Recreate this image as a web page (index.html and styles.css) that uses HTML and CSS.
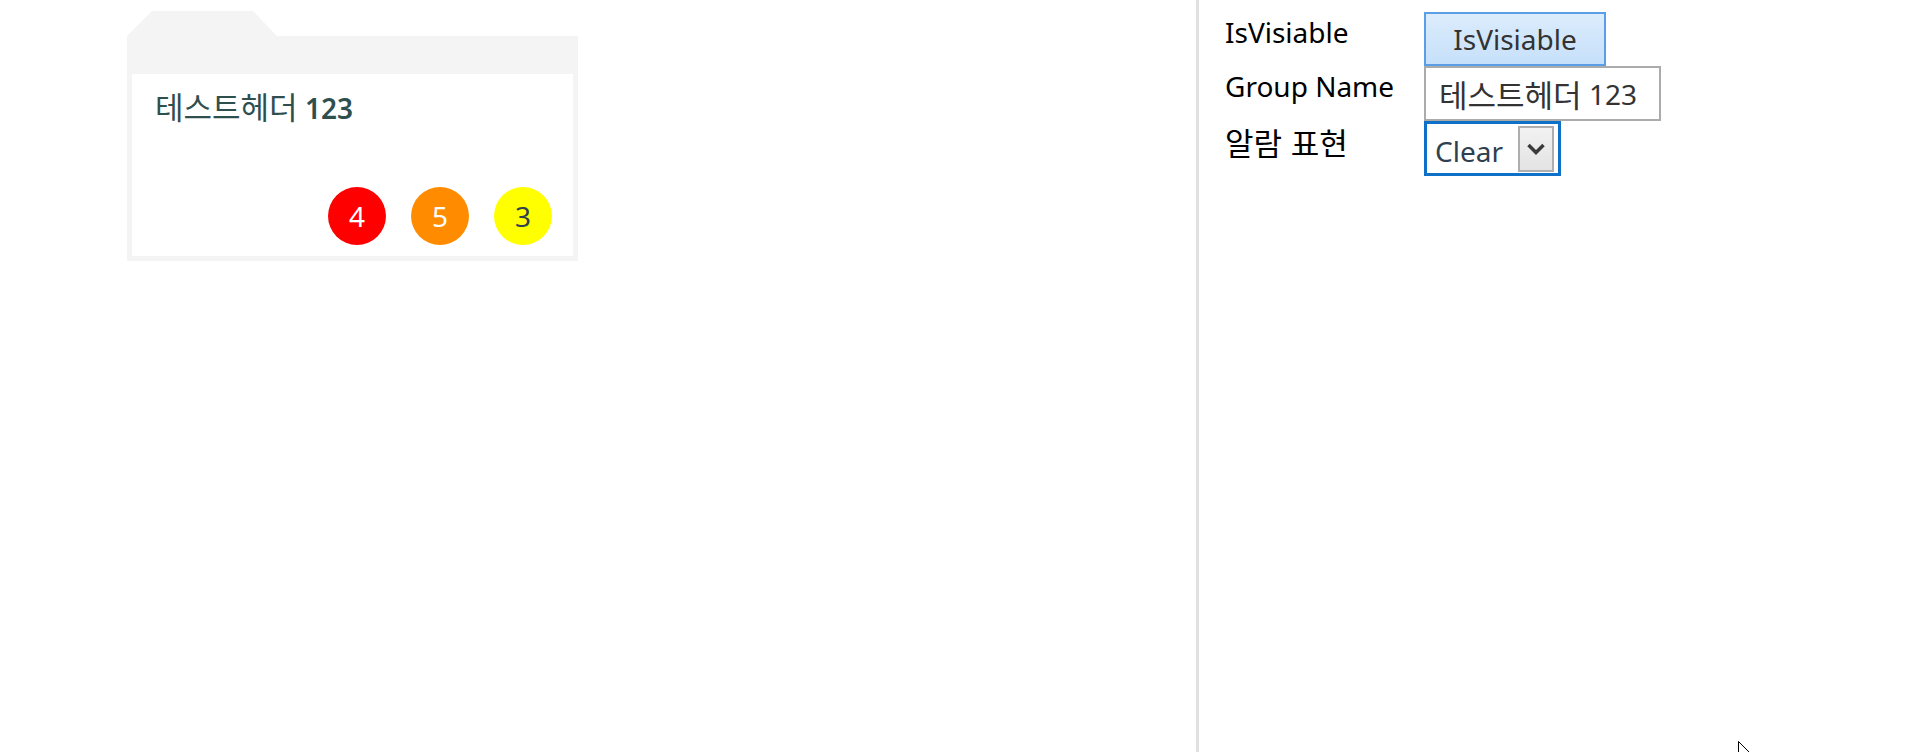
FILE: index.html
```html
<!DOCTYPE html>
<html lang="ko">
<head>
<meta charset="utf-8">
<title>Group Designer</title>
<link rel="stylesheet" href="styles.css">
</head>
<body>
<div class="app">
  <main class="canvas">
    <div class="group">
      <div class="tab"></div>
      <div class="card">
        <div class="card-head"></div>
        <div class="card-body">
          <div class="title"><span class="ko">테스트헤더</span> <b>123</b></div>
          <div class="badges">
            <span class="badge red">4</span>
            <span class="badge orange">5</span>
            <span class="badge yellow">3</span>
          </div>
        </div>
      </div>
    </div>
  </main>
  <div class="divider"></div>
  <aside class="props">
    <div class="label">IsVisiable</div>
    <div class="cell"><button class="btn" type="button">IsVisiable</button></div>
    <div class="label">Group Name</div>
    <div class="cell"><div class="textbox"><span class="ko">테스트헤더</span>&nbsp;123</div></div>
    <div class="label"><span class="ko">알람 표현</span></div>
    <div class="cell">
      <div class="combo">
        <span class="combo-text">Clear</span>
        <span class="combo-btn">
          <svg width="18" height="12" viewBox="0 0 18 12"><path d="M1.5 2 L9 9.5 L16.5 2" fill="none" stroke="#3a3a3a" stroke-width="3.5"/></svg>
        </span>
      </div>
    </div>
  </aside>
</div>
<svg class="cursor" width="14" height="12" viewBox="0 0 14 12"><path d="M0.5 0.5 V11 M0.5 0.5 L11 11" fill="none" stroke="#000" stroke-width="1"/></svg>
</body>
</html>
```
FILE: styles.css
```css
html, body {
  margin: 0;
  padding: 0;
  background: #ffffff;
}
body {
  font-family: "Noto Sans", "Noto Sans CJK KR", sans-serif;
  font-size: 28px;
  color: #000;
  overflow: hidden;
}
.ko {
  font-family: "Noto Sans CJK KR", "Noto Sans", sans-serif;
  font-size: 31px;
}
.app {
  display: flex;
  height: 752px;
}
.canvas {
  width: 1196px;
  flex: none;
  box-sizing: border-box;
  padding: 11px 0 0 127px;
}
.group {
  width: 451px;
}
.tab {
  width: 150px;
  height: 25px;
  background: #f4f4f4;
  clip-path: polygon(25px 0, 126px 0, 150px 25px, 0 25px);
}
.card {
  width: 451px;
  box-sizing: border-box;
  border: 5px solid #f4f4f4;
}
.card-head {
  height: 33px;
  background: #f4f4f4;
}
.card-body {
  height: 182px;
  box-sizing: border-box;
  padding: 13px 21px 11px 23px;
  display: flex;
  flex-direction: column;
}
.title {
  color: #2f4f4f;
  line-height: 37px;
}
.title b {
  font-weight: 600;
}
.badges {
  margin-top: auto;
  display: flex;
  justify-content: flex-end;
  gap: 25px;
}
.badge {
  width: 58px;
  height: 58px;
  border-radius: 50%;
  display: flex;
  align-items: center;
  justify-content: center;
  color: #fff;
  line-height: 1;
}
.red { background: #ff0000; }
.orange { background: #ff8c00; }
.yellow { background: #ffff00; color: #2f3f4f; }
.divider {
  width: 3px;
  flex: none;
  background: #e0e0e0;
}
.props {
  padding: 12px 0 0 26px;
  display: grid;
  grid-template-columns: 199px auto;
  grid-auto-rows: min-content;
  align-content: start;
}
.label {
  line-height: 37px;
  padding-top: 2px;
}
.cell {
  display: flex;
}
.btn {
  width: 182px;
  height: 54px;
  box-sizing: border-box;
  border: 2px solid #5a9fe6;
  background: linear-gradient(#dcecfc, #c6e0fa);
  font-family: inherit;
  font-size: 28px;
  color: #333;
  padding: 0;
  margin: 0;
}
.textbox {
  width: 237px;
  height: 55px;
  box-sizing: border-box;
  border: 2px solid #ababab;
  padding: 0 0 0 13px;
  display: flex;
  align-items: center;
  color: #333;
  white-space: nowrap;
}
.combo {
  width: 137px;
  height: 55px;
  box-sizing: border-box;
  border: 3px solid #0f70c8;
  display: flex;
  align-items: center;
  padding: 0 4px 0 8px;
  color: #2f3f4f;
}
.combo-text {
  padding-top: 5px;
}
.combo-btn {
  margin-left: auto;
  width: 36px;
  height: 46px;
  box-sizing: border-box;
  border: 2px solid #aeaeae;
  background: linear-gradient(#f2f2f2, #e3e3e3);
  display: flex;
  align-items: center;
  justify-content: center;
}
.cursor {
  position: absolute;
  left: 1738px;
  top: 741px;
}
```
